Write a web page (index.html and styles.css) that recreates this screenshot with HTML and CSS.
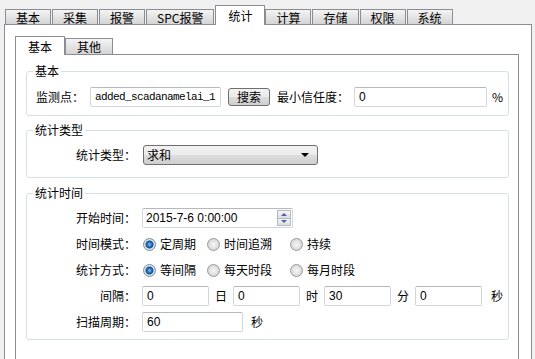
FILE: index.html
```html
<!DOCTYPE html>
<html lang="zh-CN">
<head>
    <meta charset="UTF-8">
    <title>统计</title>
    <link rel="stylesheet" href="styles.css">
</head>
<body>
    <!-- Pestañas principales -->
    <div class="tabs">
        <div class="tab">基本</div>
        <div class="tab">采集</div>
        <div class="tab">报警</div>
        <div class="tab">SPC报警</div>
        <div class="tab active">统计</div>
        <div class="tab">计算</div>
        <div class="tab">存储</div>
        <div class="tab">权限</div>
        <div class="tab">系统</div>
    </div>

    <div class="pane">
        <!-- Pestañas internas -->
        <div class="tabs sub-tabs">
            <div class="tab active">基本</div>
            <div class="tab">其他</div>
        </div>

        <div class="pane inner-pane">
            <fieldset class="group">
                <legend>基本</legend>
                <div class="row">
                    <span>监测点：</span>
                    <div class="field mono point">added_scadanamelai_1</div>
                    <div class="button">搜索</div>
                    <span>最小信任度：</span>
                    <div class="field trust">0</div>
                    <span class="unit">%</span>
                </div>
            </fieldset>

            <fieldset class="group group-type">
                <legend>统计类型</legend>
                <div class="row">
                    <span class="lbl">统计类型：</span>
                    <div class="combo">
                        <span>求和</span>
                        <span class="arrow"></span>
                    </div>
                </div>
            </fieldset>

            <fieldset class="group group-time">
                <legend>统计时间</legend>
                <div class="rows">
                    <div class="row">
                        <span class="lbl">开始时间：</span>
                        <div class="field spin">
                            <span class="spin-text">2015-7-6 0:00:00</span>
                            <div class="spin-btns">
                                <div class="spin-btn"><span class="tri up"></span></div>
                                <div class="spin-btn"><span class="tri down"></span></div>
                            </div>
                        </div>
                    </div>
                    <div class="row">
                        <span class="lbl">时间模式：</span>
                        <div class="options">
                            <label class="opt"><span class="radio checked"></span>定周期</label>
                            <label class="opt"><span class="radio"></span>时间追溯</label>
                            <label class="opt"><span class="radio"></span>持续</label>
                        </div>
                    </div>
                    <div class="row">
                        <span class="lbl">统计方式：</span>
                        <div class="options">
                            <label class="opt"><span class="radio checked"></span>等间隔</label>
                            <label class="opt"><span class="radio"></span>每天时段</label>
                            <label class="opt"><span class="radio"></span>每月时段</label>
                        </div>
                    </div>
                    <div class="row interval">
                        <span class="lbl">间隔：</span>
                        <div class="field short">0</div>
                        <span>日</span>
                        <div class="field short">0</div>
                        <span>时</span>
                        <div class="field short">30</div>
                        <span>分</span>
                        <div class="field short">0</div>
                        <span class="last">秒</span>
                    </div>
                    <div class="row">
                        <span class="lbl">扫描周期：</span>
                        <div class="field scan">60</div>
                        <span class="unit-sec">秒</span>
                    </div>
                </div>
            </fieldset>
        </div>
    </div>
</body>
</html>
```

FILE: styles.css
```css
body {
    margin: 0;
    height: 359px;
    overflow: hidden;
    background-color: #f0f0f0;
    font-family: "Noto Sans CJK SC", sans-serif;
    font-size: 12px;
    line-height: 14px;
    color: #000;
}

/* Pestañas */
.tabs {
    display: flex;
    align-items: flex-end;
    height: 24px;
    padding-left: 5px;
}

.tab {
    height: 14px;
    line-height: 15px;
    padding: 0 10px;
    margin-right: 1px;
    border: 1px solid #8b8d95;
    border-bottom: none;
    background: linear-gradient(#f4f4f4, #d4d4d4);
    white-space: nowrap;
}

.tab.active {
    position: relative;
    z-index: 2;
    height: 19px;
    line-height: 19px;
    margin: 0 0 -1px 0;
    padding: 0 12px;
    background: #fff;
}

.sub-tabs {
    height: 19px;
    padding: 10px 0 0 0;
}

.sub-tabs .tab {
    height: 15px;
    line-height: 16px;
    padding: 0 11px;
    margin-right: 0;
}

.sub-tabs .tab.active {
    height: 18px;
    line-height: 19px;
    margin: 0 0 -1px 0;
    padding: 0 12px;
}

/* Paneles */
.pane {
    width: 528px;
    height: 345px;
    margin-left: 4px;
    box-sizing: border-box;
    border: 1px solid #8b8d95;
    background-color: #fff;
    padding-left: 10px;
}

.inner-pane {
    width: 504px;
    height: 320px;
    margin-left: 0;
    padding: 0 0 0 10px;
}

/* Grupos */
.group {
    width: 483px;
    min-width: 0;
    box-sizing: border-box;
    margin: 9px 0 0 0;
    padding: 9px 9px 8px 9px;
    border: 1px solid #d5dfe5;
    border-radius: 3px;
}

.group legend {
    margin-left: -3px;
    padding: 0 2px;
    line-height: 14px;
}

.group-type {
    margin-top: 7px;
    padding-top: 8px;
    padding-bottom: 12px;
}

.group-time {
    margin-top: 8px;
    padding-top: 8px;
    padding-bottom: 7px;
}

.rows {
    display: flex;
    flex-direction: column;
    gap: 6px;
}

.row {
    display: flex;
    align-items: center;
    height: 20px;
    white-space: nowrap;
}

.row > * {
    flex-shrink: 0;
}

.lbl {
    width: 100px;
    margin-right: 6px;
    text-align: right;
}

/* Campos */
.field {
    height: 18px;
    line-height: 18px;
    padding-left: 4px;
    box-sizing: content-box;
    border: 1px solid #d2d6dc;
    border-top-color: #b4b8bf;
    border-radius: 2px;
    background-color: #fff;
    font-family: "Liberation Sans", sans-serif;
    font-size: 12px;
}

.mono {
    font-family: "Liberation Mono", monospace;
    font-size: 11px;
    letter-spacing: -0.6px;
}

.point {
    width: 125px;
    margin: 0 7px 0 6px;
}

.trust {
    width: 127px;
    margin: 0 5px;
}

.short {
    width: 61px;
    margin-right: 6px;
}

.interval span {
    margin-right: 6px;
}

.interval .last {
    margin: 0 0 0 3px;
}

.scan {
    width: 95px;
    margin-right: 8px;
}

/* Botón */
.button {
    width: 40px;
    height: 16px;
    line-height: 16px;
    margin-right: 7px;
    text-align: center;
    border: 1px solid #707070;
    border-radius: 3px;
    background: linear-gradient(#f2f2f2 0%, #ebebeb 50%, #dddddd 51%, #cfcfcf 100%);
}

/* Combo */
.combo {
    display: flex;
    align-items: center;
    justify-content: space-between;
    width: 162px;
    height: 18px;
    margin-left: 1px;
    padding: 0 8px 0 3px;
    border: 1px solid #707070;
    border-radius: 3px;
    background: linear-gradient(#f2f2f2 0%, #ebebeb 50%, #dddddd 51%, #cfcfcf 100%);
}

.arrow {
    width: 0;
    height: 0;
    border-left: 4px solid transparent;
    border-right: 4px solid transparent;
    border-top: 4px solid #000;
}

/* Selector de fecha */
.spin {
    display: flex;
    justify-content: space-between;
    width: 146px;
    padding-left: 3px;
}

.spin-btns {
    display: flex;
    flex-direction: column;
    width: 14px;
    margin: 1px;
}

.spin-btn {
    display: flex;
    align-items: center;
    justify-content: center;
    height: 7px;
    border: 1px solid #b5b9c2;
    background: linear-gradient(#f6f6f6, #dadde3);
}

.spin-btn + .spin-btn {
    border-top: none;
    height: 7px;
}

.tri {
    width: 0;
    height: 0;
    border-left: 3px solid transparent;
    border-right: 3px solid transparent;
}

.tri.up {
    border-bottom: 3px solid #4c5fa8;
}

.tri.down {
    border-top: 3px solid #4c5fa8;
}

/* Opciones */
.options {
    display: grid;
    grid-template-columns: 64px 83px auto;
}

.opt {
    display: flex;
    align-items: center;
}

.radio {
    width: 11px;
    height: 11px;
    margin: 0 4px 0 1px;
    border: 1px solid #9a9a9a;
    border-radius: 50%;
    background: radial-gradient(circle, #f6f6f6 0, #e4e4e4 45%, #c9c9c9 100%);
}

.radio.checked {
    border-color: #7f8d9c;
    background: radial-gradient(circle, #8ccaf5 0, #2a7ac2 2px, #134f8c 3.5px, #dfe6ee 4.5px, #c4ccd4 100%);
}
```
